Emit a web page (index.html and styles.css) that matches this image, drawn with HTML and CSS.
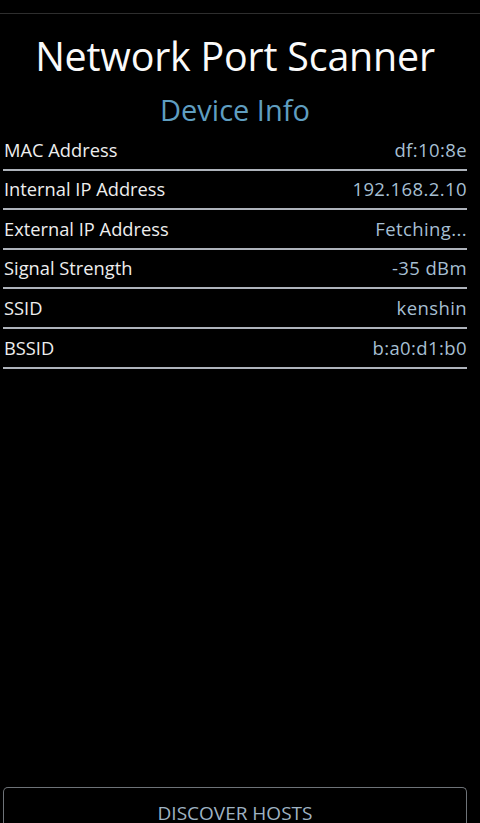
FILE: index.html
```html
<!DOCTYPE html>
<html>
<head>
<meta charset="utf-8">
<link rel="stylesheet" href="styles.css">
</head>
<body>
<div class="app">
  <div class="statusbar"></div>
  <div class="content">
    <h1 class="title">Network Port Scanner</h1>
    <h2 class="subtitle">Device Info</h2>
    <div class="info">
      <div class="row"><span class="label">MAC Address</span><span class="value">df:10:8e</span></div>
      <div class="row"><span class="label">Internal IP Address</span><span class="value">192.168.2.10</span></div>
      <div class="row"><span class="label">External IP Address</span><span class="value">Fetching...</span></div>
      <div class="row"><span class="label">Signal Strength</span><span class="value">-35 dBm</span></div>
      <div class="row"><span class="label">SSID</span><span class="value">kenshin</span></div>
      <div class="row"><span class="label">BSSID</span><span class="value">b:a0:d1:b0</span></div>
    </div>
    <div class="spacer"></div>
    <div class="footer">
      <button class="discover">DISCOVER HOSTS</button>
    </div>
  </div>
</div>
</body>
</html>
```
FILE: styles.css
```css
html, body {
  margin: 0;
  padding: 0;
  background: #000;
}
body {
  font-family: "Open Sans", "Noto Sans", sans-serif;
  color: #f2f2f2;
}
.app {
  width: 480px;
  height: 823px;
  overflow: hidden;
  display: flex;
  flex-direction: column;
}
.statusbar {
  height: 13px;
  border-bottom: 1px solid #2e2e2e;
  flex: none;
}
.content {
  flex: 1;
  display: flex;
  flex-direction: column;
  padding: 0 13px 0 3px;
  min-height: 0;
}
.title {
  margin: 0;
  padding-top: 18px;
  font-size: 39.4px;
  font-weight: 400;
  line-height: 48px;
  text-align: center;
  color: #fafafa;
  letter-spacing: -0.2px;
}
.subtitle {
  margin: 10px 0 0;
  font-size: 29px;
  font-weight: 400;
  line-height: 40px;
  text-align: center;
  color: #5f9ec0;
}
.info {
  display: flex;
  flex-direction: column;
  margin-top: 1px;
}
.row {
  display: flex;
  justify-content: space-between;
  align-items: flex-end;
  height: 37.6px;
  border-bottom: 2px solid #aeb3bb;
  line-height: 24px;
}
.label, .value {
  padding-bottom: 7px;
}
.label {
  color: #eeeeee;
  padding-left: 1px;
  font-size: 18.3px;
}
.value {
  color: #a6bfd2;
  font-size: 18.5px;
  letter-spacing: 0.4px;
}
.spacer {
  flex: 1;
}
.footer {
  flex: none;
  height: 36px;
}
.discover {
  box-sizing: border-box;
  width: 100%;
  height: 36px;
  background: #000;
  border: 1.5px solid #6e7378;
  border-bottom: none;
  border-radius: 5px 5px 0 0;
  color: #9fb3c3;
  font-family: "Open Sans", "Noto Sans", sans-serif;
  font-size: 19px;
  line-height: 14px;
  padding: 18px 0 0;
  display: flex;
  justify-content: center;
  align-items: flex-start;
}
```
